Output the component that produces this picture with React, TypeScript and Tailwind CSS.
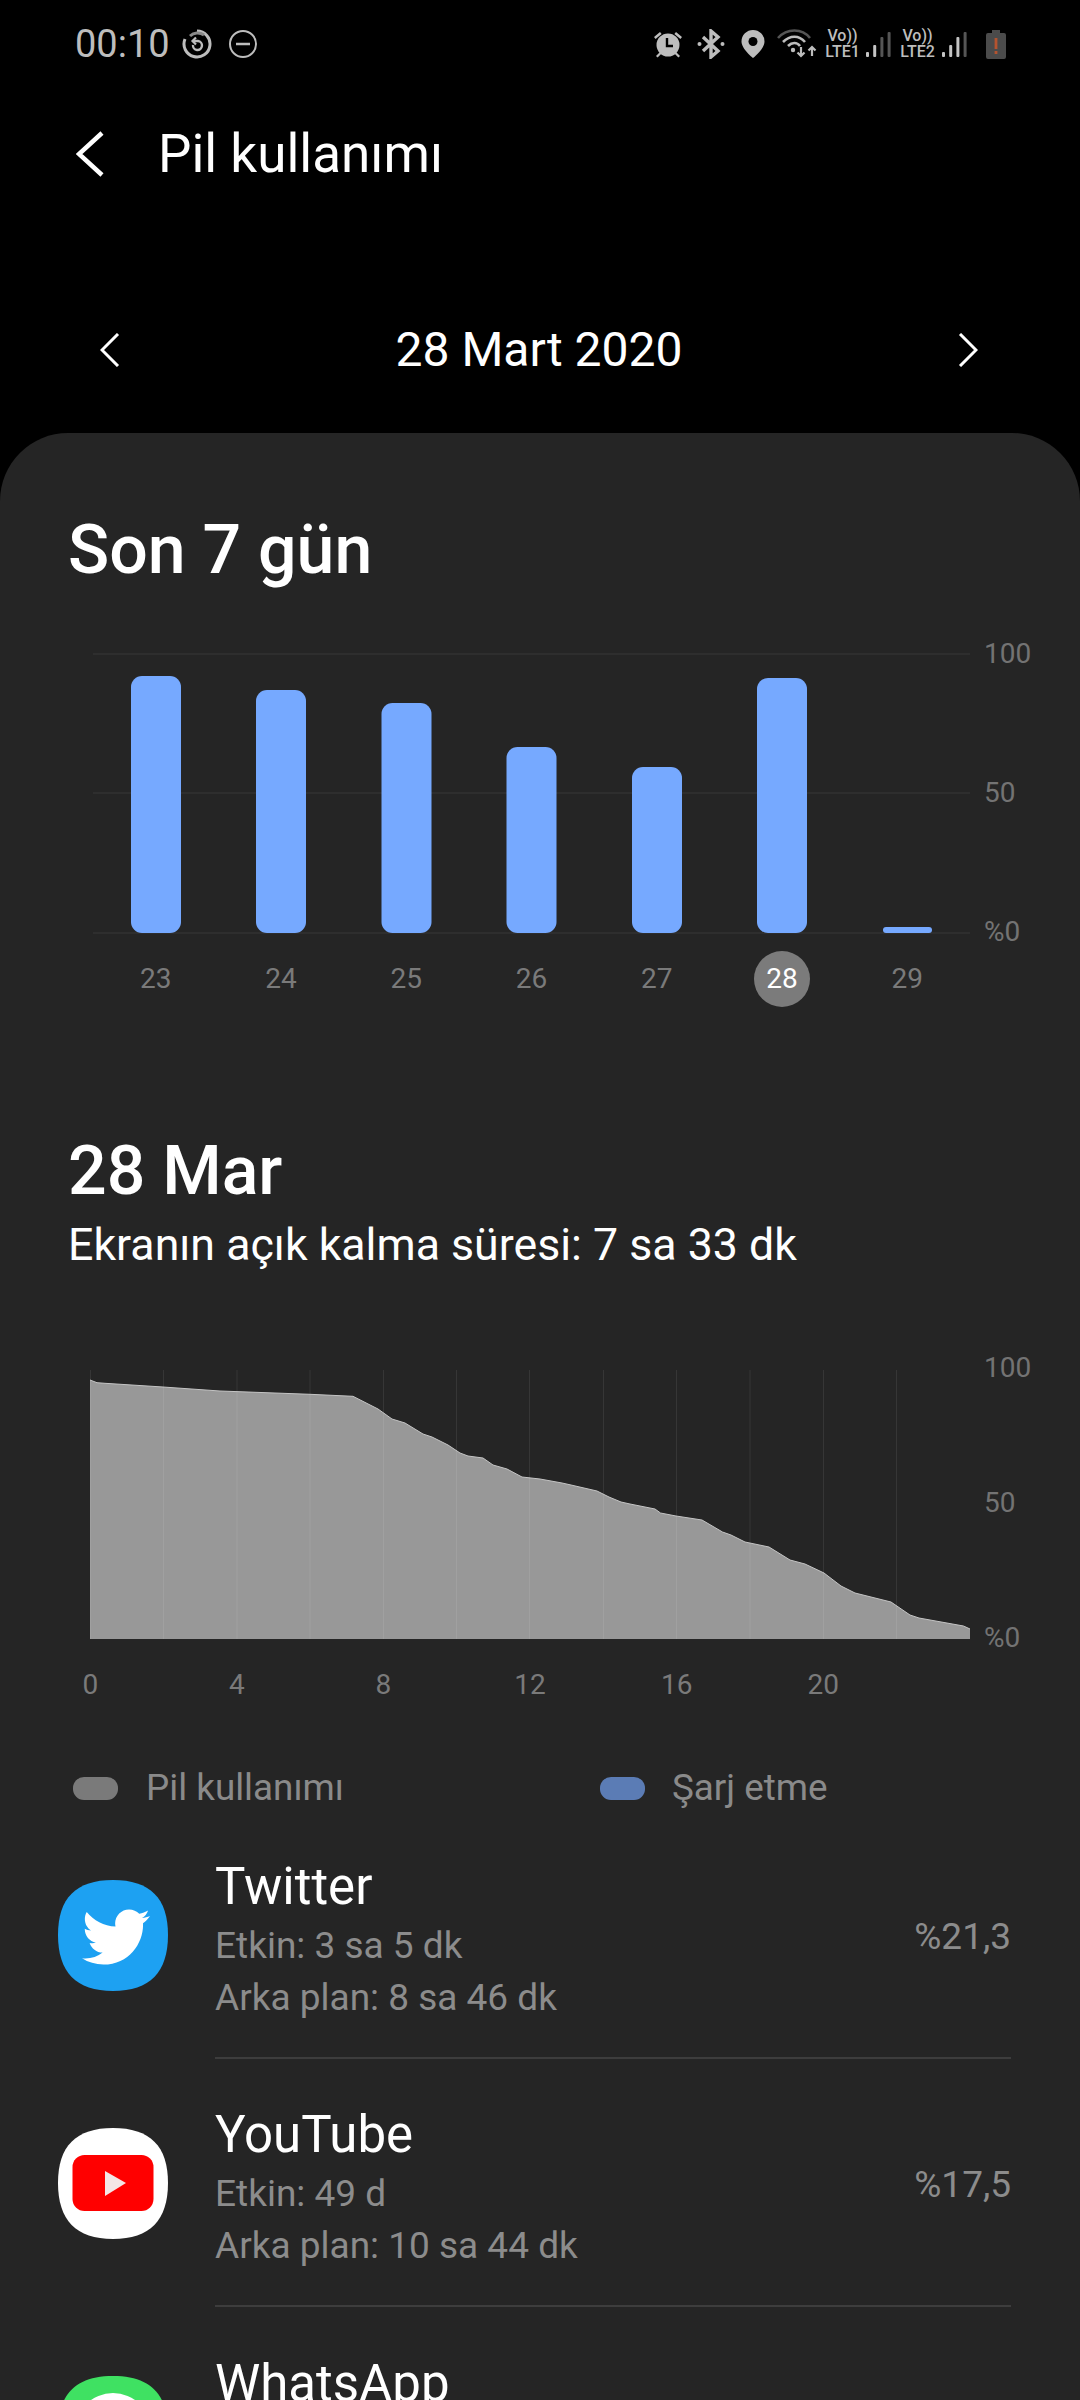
import React from "react";
import { FaTwitter } from "react-icons/fa";

const bars: [number, number][] = [
  [131, 676], [256, 690], [381.5, 703], [506.5, 747], [632, 767], [757, 678],
];
const days = ["23", "24", "25", "26", "27", "28", "29"];
const hours = ["0", "4", "8", "12", "16", "20"];
const area: [number, number][] = [
  [90,1380],[97,1382.7],[105,1383.3],[163,1387],[220,1391],[310,1394.3],[353,1396.3],[378,1409],[392,1419],[405,1423],[423,1434],[432,1437],[448,1445],[460,1453],[468,1456],[483,1458],[493,1465],[507,1469],[522,1477],[540,1479],[562,1483],[571,1485],[597,1491],[609,1497],[621,1502],[630,1504],[655,1509],[660.5,1513],[676,1516],[702,1520],[722.5,1532],[731,1535],[745,1542],[769,1547],[790,1560],[805,1564],[824,1573],[841,1586],[855,1593],[891,1602],[910,1615],[919,1618],[963.5,1626],[970,1629],
];
const grid = [90, 163, 236.5, 309.5, 383, 456, 529, 603, 676, 749.5, 823, 896];
const top = 1360;
const line = area.map(([x, y]) => `${x},${y - top}`).join(" ");
const squircle = "M55 0C92 0 110 18 110 55C110 92 92 111 55 111C18 111 0 92 0 55C0 18 18 0 55 0Z";

function Signal({ bright }: { bright: number }) {
  const h = [5, 12, 20, 25];
  return (
    <svg width="25" height="28" viewBox="0 0 25 28" className="shrink-0">
      {h.map((v, i) => (
        <rect key={i} x={i * 7.2} y={27 - v} width="3" height={v} rx="1" fill={i < bright ? "#c4c4c4" : "#555555"} />
      ))}
    </svg>
  );
}

function Lte({ n }: { n: string }) {
  return (
    <div className="flex w-[37px] flex-col items-center text-[16px] leading-[16px] font-medium text-[#bdbdbd]">
      <span>{"Vo))"}</span>
      <span>{n}</span>
    </div>
  );
}

function StatusBar() {
  return (
    <div className="flex h-[88px] shrink-0 items-center pl-[75px] pr-[74px] text-[#bdbdbd]">
      <span className="text-[38px] leading-none">00:10</span>
      <svg width="30" height="30" viewBox="0 0 30 30" fill="none" stroke="#bdbdbd" className="ml-[12px]">
        <path d="M15 2a13 13 0 1 1-12 8" strokeWidth="3" />
        <path d="M8 7A11 11 0 0 1 22 6" strokeWidth="3" stroke="#8a8a8a" />
        <path d="M11 12h5a4.5 4.5 0 1 1-5 4" strokeWidth="2.4" />
        <path d="M14 8.500L10.500 12l3.500 3.500" strokeWidth="2.2" />
      </svg>
      <svg width="30" height="30" viewBox="0 0 30 30" fill="none" stroke="#bdbdbd" className="ml-[16px]">
        <circle cx="15" cy="15" r="13" strokeWidth="2" />
        <path d="M8 15h14" strokeWidth="2.5" />
      </svg>
      <div className="flex-1" />
      <svg width="32" height="30" viewBox="0 0 32 30" fill="#bdbdbd">
        <circle cx="16" cy="16" r="11.5" />
        <path d="M15 9v8h6" fill="none" stroke="#000" strokeWidth="2.4" />
        <path d="M2 8l6-5 1.6 2-6 5zM30 8l-6-5-1.6 2 6 5z" />
        <path d="M8 23l-4 4 1.6 1.6 4-4zM24 23l4 4-1.6 1.6-4-4z" />
      </svg>
      <svg width="28" height="30" viewBox="0 0 28 30" fill="none" stroke="#bdbdbd" strokeWidth="3.4" className="ml-[13px]">
        <path d="M6 8l15 14-7 6V2l7 6L6 22" />
        <circle cx="2.5" cy="15" r="2" fill="#bdbdbd" stroke="none" />
        <circle cx="25.5" cy="15" r="2" fill="#bdbdbd" stroke="none" />
      </svg>
      <svg width="24" height="28" viewBox="0 0 24 28" className="ml-[16px]">
        <path d="M12 0a11.5 11.5 0 0 1 11.5 11.5C23.500 19 12 28 12 28S.5 19 .5 11.500A11.500 11.500 0 0 1 12 0Z" fill="#bdbdbd" />
        <circle cx="12" cy="11.500" r="4.500" fill="#000" />
      </svg>
      <svg width="40" height="30" viewBox="0 0 40 30" fill="none" className="ml-[12px]">
        <path d="M1 9C10-1 25-1 33 9" stroke="#555555" strokeWidth="2.600" />
        <path d="M6 13C13 6 22 6 28 13" stroke="#bdbdbd" strokeWidth="2.600" />
        <path d="M11 17C15 13 20 13 23 17" stroke="#bdbdbd" strokeWidth="2.600" />
        <circle cx="16" cy="21" r="2.200" fill="#bdbdbd" />
        <path d="M24 18v9M20.500 23.500l3.500 3.500 3.500-3.500" stroke="#bdbdbd" strokeWidth="2.200" />
        <path d="M35 27v-9M31.500 21.500l3.500-3.500 3.500 3.500" stroke="#bdbdbd" strokeWidth="2.200" />
      </svg>
      <div className="ml-[7px]"><Lte n="LTE1" /></div>
      <div className="ml-[5px]"><Signal bright={2} /></div>
      <div className="ml-[8px]"><Lte n="LTE2" /></div>
      <div className="ml-[6px]"><Signal bright={3} /></div>
      <svg width="20" height="29" viewBox="0 0 20 29" className="ml-[19px]">
        <path d="M6 0h8v3h4a2 2 0 0 1 2 2v22a2 2 0 0 1-2 2H2a2 2 0 0 1-2-2V5a2 2 0 0 1 2-2h4Z" fill="#4b4b4b" />
        <rect x="8.600" y="8" width="2.800" height="11" fill="#b5532f" />
        <rect x="8.600" y="21" width="2.800" height="3" fill="#b5532f" />
      </svg>
    </div>
  );
}

function YAxis({ h }: { h: string }) {
  return (
    <div className={`${h} flex w-[60px] flex-col justify-between pl-[14px] text-[28px] leading-[40px] text-[#737373]`}>
      <span>100</span>
      <span>50</span>
      <span>%0</span>
    </div>
  );
}

function AppRow({ icon, name, active, bg, pct, border = true }: { icon: React.ReactNode; name: string; active: string; bg: string; pct: string; border?: boolean }) {
  return (
    <div className="flex h-[248px] shrink-0 pl-[58px] pr-[69px]">
      <div className="flex w-[157px] shrink-0 items-center">{icon}</div>
      <div className={`flex flex-1 items-center justify-between ${border ? "border-b-2 border-[#3d3d3d]" : ""}`}>
        <div className="pt-[17px]">
          <div className="text-[51px] leading-[52px] text-white">{name}</div>
          <div className="mt-[7px] h-[52px] text-[37px] leading-[52px] text-[#8c8c8c]">{active}</div>
          <div className="h-[52px] text-[37px] leading-[52px] text-[#8c8c8c]">{bg}</div>
        </div>
        <div className="pt-[6px] text-[37px] leading-[52px] text-[#8c8c8c]">{pct}</div>
      </div>
    </div>
  );
}

export default function App() {
  return (
    <div className="flex h-[2400px] w-[1080px] flex-col overflow-hidden bg-black font-['Roboto',sans-serif]">
      <StatusBar />
      <div className="flex h-[132px] shrink-0 items-center pl-[76px]">
        <svg width="28" height="46" viewBox="0 0 28 46" fill="none" stroke="#fff" strokeWidth="4.500">
          <path d="M26 2L3 23l23 21" />
        </svg>
        <span className="ml-[54px] text-[53px] leading-none text-white">Pil kullanımı</span>
      </div>
      <div className="flex h-[213px] shrink-0 items-center justify-between pb-[1px] pl-[100px] pr-[102px] pt-[48px]">
        <svg width="20" height="34" viewBox="0 0 20 34" fill="none" stroke="#fff" strokeWidth="3"><path d="M18 1L2 17l16 16" /></svg>
        <span className="text-[48px] leading-none text-white">28 Mart 2020</span>
        <svg width="20" height="34" viewBox="0 0 20 34" fill="none" stroke="#fff" strokeWidth="3"><path d="M2 1l16 16L2 33" /></svg>
      </div>

      <div className="min-h-0 flex-1 rounded-t-[68px] bg-[#252525]">
        <h2 className="ml-[68px] mt-[77px] text-[68px] leading-[80px] font-medium text-white">Son 7 gün</h2>

        <div className="mt-[60px] flex h-[290px]">
          <svg width="970" height="290" viewBox="0 0 970 290" className="shrink-0">
            {[3, 142, 282].map((y) => (
              <rect key={y} x="93" y={y} width="877" height="2" fill="#2e2e2e" />
            ))}
            {bars.map(([x, y]) => (
              <rect key={x} x={x} y={y - 650} width="50" height={933 - y} rx="11" fill="#76a9ff" />
            ))}
            <rect x="883" y="277" width="49" height="6" rx="3" fill="#76a9ff" />
          </svg>
          <YAxis h="-mt-[16px] h-[318px]" />
        </div>

        <div className="mt-[11px] grid w-[970px] grid-cols-7 pl-[93px] text-[28px] text-[#7a7a7a]">
          {days.map((d) => (
            <div key={d} className="flex h-[56px] items-center justify-center">
              {d === "28" ? (
                <span className="flex h-[56px] w-[56px] items-center justify-center rounded-full bg-[#7b7b7b] text-white">{d}</span>
              ) : (
                d
              )}
            </div>
          ))}
        </div>

        <h2 className="ml-[68px] mt-[124px] text-[68px] leading-[80px] font-medium text-white">28 Mar</h2>
        <p className="ml-[68px] mt-[4px] text-[44.700px] leading-[60px] text-white">Ekranın açık kalma süresi: 7 sa 33 dk</p>

        <div className="mt-[85px] flex h-[285px]">
          <svg width="970" height="285" viewBox="0 0 970 285" className="shrink-0">
            <polygon points={`90,279 ${line} 970,279`} fill="#989898" />
            <polyline points={line} fill="none" stroke="#c4c4c4" strokeWidth="1" />
            {grid.map((x) => (
              <rect key={x} x={x} y="10" width="1" height="269" fill="#ffffff" fillOpacity="0.08" />
            ))}
          </svg>
          <YAxis h="-mt-[12px] h-[310px]" />
        </div>

        <div className="ml-[17px] mt-[20px] flex text-[28px] leading-[40px] text-[#7a7a7a]">
          {hours.map((h) => (
            <span key={h} className="w-[146.600px] text-center">{h}</span>
          ))}
        </div>

        <div className="mt-[63px] flex h-[40px] items-center text-[36.800px] text-[#8a8a8a]">
          <span className="ml-[73px] h-[23px] w-[45px] rounded-[11px] bg-[#7a7a7a]" />
          <span className="ml-[28px] w-[454px]">Pil kullanımı</span>
          <span className="h-[23px] w-[45px] rounded-[11px] bg-[#5b7cb5]" />
          <span className="ml-[27px]">Şarj etme</span>
        </div>

        <div className="mt-[3px]">
          <AppRow
            name="Twitter"
            active="Etkin: 3 sa 5 dk"
            bg="Arka plan: 8 sa 46 dk"
            pct="%21,3"
            icon={
              <div className="relative h-[111px] w-[110px]">
                <svg width="110" height="111" viewBox="0 0 110 111"><path d={squircle} fill="#1da1f2" /></svg>
                <FaTwitter className="absolute left-[24px] top-[23px] text-white" size={68} />
              </div>
            }
          />
          <AppRow
            name="YouTube"
            active="Etkin: 49 d"
            bg="Arka plan: 10 sa 44 dk"
            pct="%17,5"
            icon={
              <svg width="110" height="111" viewBox="0 0 110 111">
                <path d={squircle} fill="#ffffff" />
                <rect x="14.500" y="27" width="81" height="56" rx="12" fill="#ff0000" />
                <path d="M47 43l21 12-21 13z" fill="#f4e6e6" />
              </svg>
            }
          />
          <AppRow
            name="WhatsApp"
            active=""
            bg=""
            pct=""
            border={false}
            icon={
              <svg width="110" height="111" viewBox="0 0 110 111">
                <path d={squircle} fill="#3fe162" />
                <circle cx="55" cy="55" r="38" fill="#ffffff" />
                <circle cx="55" cy="55" r="31" fill="#3fe162" />
              </svg>
            }
          />
        </div>
      </div>
    </div>
  );
}
